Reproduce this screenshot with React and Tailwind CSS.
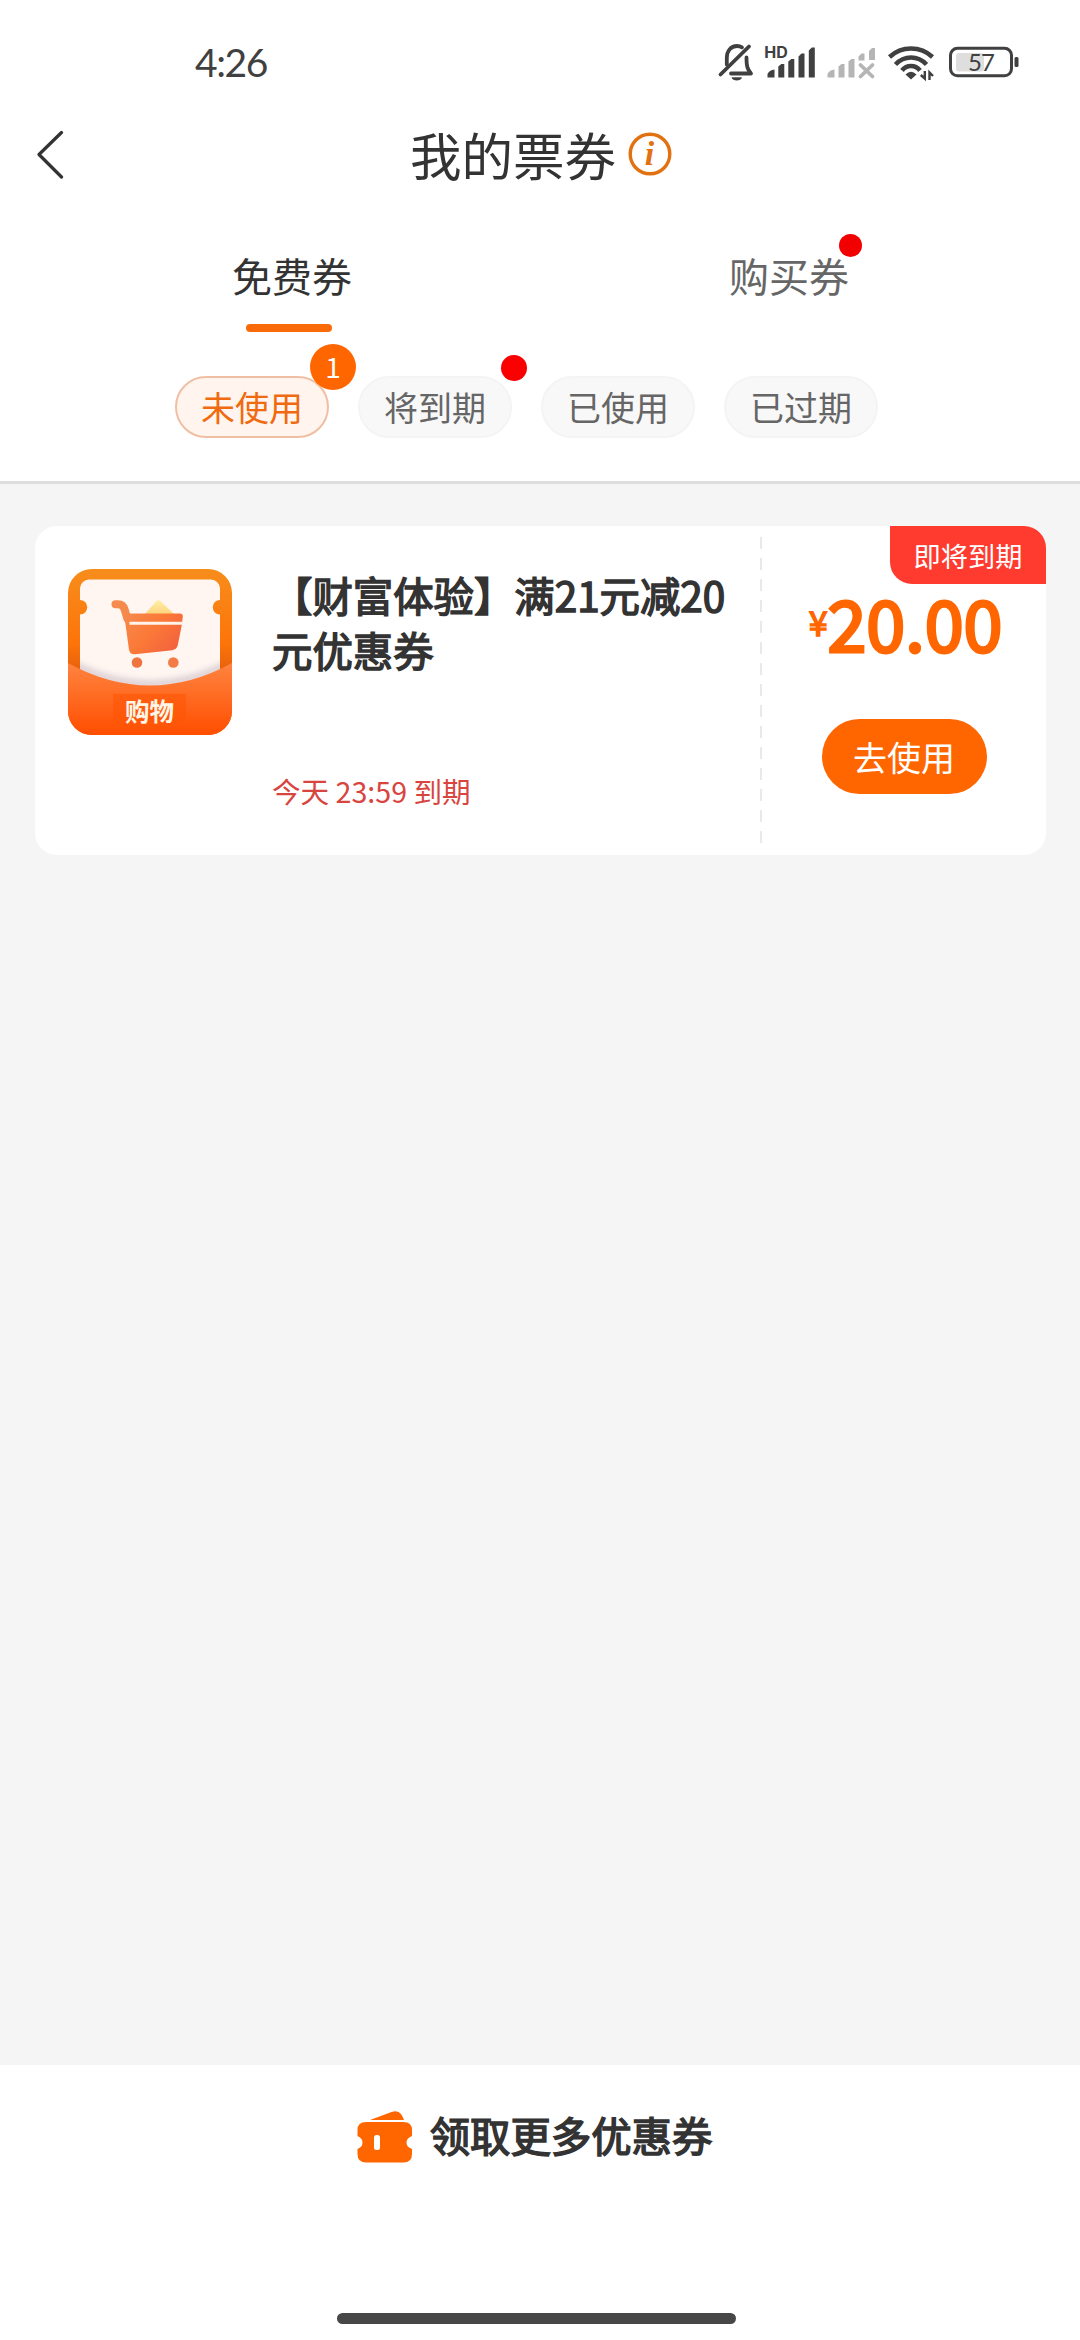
import React from "react";

const statusTabs = [
  { label: "未使用", active: true, count: 1 },
  { label: "将到期", dot: true },
  { label: "已使用" },
  { label: "已过期" },
];

const App = () => {
  return (
    <div className="flex flex-col w-[1080px] h-[2340px] bg-[#f5f5f5] overflow-hidden font-['Noto_Sans_CJK_SC',sans-serif] text-[#333333]">
      <header className="h-[484px] shrink-0 bg-white border-b-3 border-[#dedede]">
        <StatusBar />

        {/* Title */}
        <div className="flex items-center h-[98px] mt-[3px] pl-[35px]">
          <svg width="30" height="50" viewBox="0 0 30 50" fill="none" stroke="#333333" strokeWidth="3.2" strokeLinecap="round" strokeLinejoin="round">
            <path d="M26.5 3.5 4 25.5l22.5 22.5" />
          </svg>
          <h1 className="ml-[345px] text-[51.5px] leading-none">我的票券</h1>
          <InfoIcon />
        </div>

        {/* Ticket types */}
        <nav className="flex h-[126px] text-[40px] leading-[60px]">
          <div className="flex flex-col items-center w-[498px] pl-[86px] pt-[42px]">
            <span>免费券</span>
            <span className="w-[86px] h-2 shrink-0 mt-[19px] mr-[6px] rounded-full bg-[#f96a0a]" />
          </div>
          <div className="pl-[231px] pt-[42px] text-[#666666]">
            <span className="relative">
              购买券
              <span className="absolute -right-[13px] -top-[12px] size-[23px] rounded-full bg-[#f20000]" />
            </span>
          </div>
        </nav>

        {/* Status filter */}
        <div className="flex gap-[29px] pl-[175px] pt-[47px]">
          {statusTabs.map((tab) => (
            <Chip key={tab.label} {...tab} />
          ))}
        </div>
      </header>

      <main className="flex-1 px-[35px] pt-[42px]">
        <Coupon />
      </main>

      <footer className="flex flex-col items-center h-[275px] shrink-0 bg-white">
        <div className="flex items-center h-[141px] gap-[17px] pr-[11px] text-[40.4px] leading-none [-webkit-text-stroke:1.5px_#333333]">
          <TicketIcon />
          领取更多优惠券
        </div>
        <span className="w-[399px] h-[11px] mt-[107px] mr-[7px] rounded-full bg-[#474747]" />
      </footer>
    </div>
  );
};

const StatusBar = () => (
  <div className="flex items-center h-[102px] pt-[22px] pl-[195px] text-[#404040]">
    <span className="w-[519px] font-['Lato'] text-[39px] leading-none tracking-[-1.4px]">4:26</span>
    <svg width="306" height="44" viewBox="714 40 306 44" fill="none" stroke="#404040">
      {/* Muted bell */}
      <g strokeWidth="3.8" strokeLinecap="round" strokeLinejoin="round">
        <path d="m720.5 74.5 28.5-28" />
        <path d="M726.8 64.500v-6.500c0-7 4-12 10.200-12 2 0 3.500.4 5 1.300" />
        <path d="M746.500 57.500c0 9 1 12 4.500 16h-20" />
        <path d="M731.500 77.300h10.500c-1 4.300-9.500 4.300-10.500 0z" fill="#404040" stroke="none" />
      </g>
      {/* HD signal */}
      <g fill="#404040" stroke="none">
        <path d="M767.500 77.500v-3c0-2 4-5 7-5v8zM778.300 77.500v-11l3-2.500h3v13.500zM788.300 77.500v-16l3-2.500h3v18.500zM798.500 77.500v-21l3-3h3v24zM808.800 77.500v-27l3-3h3v30z" />
        <text x="764.3" y="58" fontSize="16" fontWeight="700" fontFamily="Inter, sans-serif">HD</text>
      </g>
      {/* Second SIM, no signal */}
      <g fill="#b5b5b5" stroke="none">
        <path d="M827.500 77.500v-3c0-2 4-5 7-5v8zM838.500 77.500v-11l3-2.500h3v13.500zM848.500 77.500v-16l3-2.500h3v18.500zM858.500 60.500v-4l3-3h3v7zM869 60v-9l3-3h3v12z" />
        <path d="m860.5 65 12 11.500M872.500 65l-12 11.500" stroke="#b5b5b5" strokeWidth="3.8" strokeLinecap="round" />
      </g>
      {/* Wifi */}
      <g strokeWidth="4.500">
        <path d="M889.500 57q9-8.500 21.500-8.500t21.500 8.500" />
        <path d="M895.500 64.500q6.500-7 15.500-7t15.500 7" />
        <path d="M902 70.500q3.500-4.500 9-4.500t9 4.500" />
        <path d="M905.500 74.500q5.500-5.500 11 0l-5.500 5z" fill="#404040" stroke="none" />
        <path d="M924.800 71v7.500l-4-3.500M929.500 80v-7.500l3.500 3.500" strokeWidth="2.4" />
      </g>
      {/* Battery */}
      <rect x="956" y="53" width="28" height="18.500" rx="3" fill="#dedede" stroke="none" />
      <rect x="950.5" y="48.3" width="61" height="27.500" rx="7" strokeWidth="3" />
      <rect x="1014.5" y="57" width="4" height="10" rx="1.500" fill="#404040" stroke="none" />
      <text x="981" y="71" textAnchor="middle" fontSize="24" fontFamily="Lato, sans-serif" letterSpacing="-1" fill="#404040" stroke="none">57</text>
    </svg>
  </div>
);

const InfoIcon = () => (
  <svg className="ml-[11px]" width="46" height="46" viewBox="0 0 46 46">
    <circle cx="23" cy="23" r="19.800" fill="none" stroke="#e27112" strokeWidth="3.400" />
    <text x="22.500" y="34" textAnchor="middle" fontSize="34" fontWeight="700" fontStyle="italic" fontFamily="Liberation Serif, serif" fill="#e27112">i</text>
  </svg>
);

const Chip = ({ label, active, count, dot }) => (
  <div
    className={`relative flex items-center justify-center w-[154px] h-[62px] rounded-full border-2 text-[34px] leading-none ${
      active
        ? "bg-[#fff5ee] border-[#f0bfa3] text-[#f06a10]"
        : "bg-[#f8f8f8] border-[#f4f4f4] text-[#666666]"
    }`}
  >
    {label}
    {count && (
      <span className="absolute -right-[29px] -top-[34px] flex items-center justify-center size-[46px] pb-[2px] rounded-full bg-[#ff6600] text-white text-[28px]">
        {count}
      </span>
    )}
    {dot && <span className="absolute -right-[17px] -top-[23px] size-[26px] rounded-full bg-[#fb0000]" />}
  </div>
);

const Coupon = () => (
  <section className="relative flex h-[329px] w-[1011px] rounded-[22px] bg-white">
    <div className="flex w-[725px] pl-[33px] pt-[43px]">
      <CartIcon />
      <div className="-mt-[2px] ml-[40px] w-[460px]">
        <h2 className="text-[40.4px] leading-[55px] font-normal [-webkit-text-stroke:1.5px_#333333]">
          【财富体验】满21元减20元优惠券
        </h2>
        <p className="mt-[94px] text-[28.6px] leading-[40px] text-[#d8453f]">今天 23:59 到期</p>
      </div>
    </div>
    <div className="my-[11px] w-[2px] bg-[repeating-linear-gradient(#e9e9e9_0_12px,transparent_12px_21px)]" />
    <div className="flex flex-col items-center w-[284px] pt-[56px]">
      <p className="flex items-center h-[80px] pl-[3px] text-[#ff6600] leading-none">
        <span className="text-[34px] [-webkit-text-stroke:1.5px_#ff6600]">¥</span>
        <span className="text-[70px] [-webkit-text-stroke:3px_#ff6600]">20.00</span>
      </p>
      <button className="mt-[57px] w-[165px] h-[75px] rounded-full bg-[#ff6600] text-white text-[34px] leading-none">去使用</button>
    </div>
    <span className="absolute right-0 top-0 flex items-center justify-center w-[156px] h-[58px] pt-px rounded-tr-[22px] rounded-bl-[22px] bg-[#ff3b30] text-white text-[27.2px] leading-none">
      即将到期
    </span>
  </section>
);

const CartIcon = () => (
  <svg width="164" height="166" viewBox="0 0 164 166">
    <defs>
      <linearGradient id="frame" x1="0" y1="0" x2="0" y2="1">
        <stop offset="0" stopColor="#f78d1c" />
        <stop offset="0.45" stopColor="#fd7409" />
        <stop offset="0.6" stopColor="#e8620c" />
      </linearGradient>
      <linearGradient id="pocket" x1="0" y1="0" x2="0" y2="1">
        <stop offset="0" stopColor="#ff8440" />
        <stop offset="1" stopColor="#ff4e00" />
      </linearGradient>
      <linearGradient id="cart" x1="0" y1="0" x2="1" y2="0.6">
        <stop offset="0" stopColor="#f58a4e" />
        <stop offset="0.5" stopColor="#fb7a38" />
        <stop offset="1" stopColor="#f4643c" />
      </linearGradient>
      <linearGradient id="gold" x1="0" y1="0" x2="0" y2="1">
        <stop offset="0" stopColor="#fdf0a8" />
        <stop offset="1" stopColor="#fdd47c" />
      </linearGradient>
      <clipPath id="tile">
        <rect width="164" height="166" rx="24" />
      </clipPath>
      <clipPath id="paper">
        <path d="M21 10.500H143a9 9 0 0 1 9 9V31a7 7 0 0 0 0 14.500V130H12V45.500a7 7 0 0 0 0-14.500V19.500a9 9 0 0 1 9-9z" />
      </clipPath>
      <filter id="soft">
        <feGaussianBlur stdDeviation="3" />
      </filter>
    </defs>
    <g clipPath="url(#tile)">
      <rect width="164" height="166" fill="url(#frame)" />
      <g clipPath="url(#paper)">
        <rect width="164" height="130" fill="#fff6f1" />
        <path d="M0 93Q82 138 164 93" fill="none" stroke="#dccfd4" strokeWidth="8" filter="url(#soft)" />
      </g>
      <path d="M0 94Q82 139 164 94V166H0z" fill="url(#pocket)" />
      <rect x="45" y="125" width="73" height="29" fill="#ff5505" opacity="0.6" />
    </g>
    {/* Cart */}
    <path d="M77 45 88 32.500q2.500-2.500 5 0L106 45z" fill="url(#gold)" />
    <path d="M47.500 35.200h2.500q5 0 6.500 5l3 10" fill="none" stroke="#f58a4e" strokeWidth="8" strokeLinecap="round" />
    <path d="M56 44.500h56q3 0 2.800 3l-1 8.500-4 20q-1 4.500-5.500 5.200L67 85.300q-5 .5-6-4.500z" fill="url(#cart)" />
    <path d="M61.500 54.300h53" stroke="#fff3ea" strokeWidth="3" />
    <circle cx="69" cy="93.500" r="5.300" fill="#ef7440" />
    <circle cx="105.300" cy="93.500" r="5.300" fill="#f27b48" />
    <text x="81.500" y="152" textAnchor="middle" fontSize="24.500" fontWeight="700" fontFamily="Noto Sans CJK SC, sans-serif" fill="#fff6e8">购物</text>
  </svg>
);

const TicketIcon = () => (
  <svg className="mt-[4px]" width="56" height="54" viewBox="0 0 56 54" fill="#ff6600">
    <path d="M13 9 34.500 1Q41-1 44 3q2 3 3 6z" />
    <path d="M9 11h37.500q8.500 0 8.500 8v6q-5.500 2-5.500 6.500t5.500 6.500v5q0 8.500-8.500 8.500H9q-8.500 0-8.500-8.500v-5q5-2 5-6.500t-5-6.500v-6q0-8 8.500-8z" />
    <rect x="17" y="24" width="6" height="15" rx="2.500" fill="#ffffff" />
  </svg>
);

export default App;
